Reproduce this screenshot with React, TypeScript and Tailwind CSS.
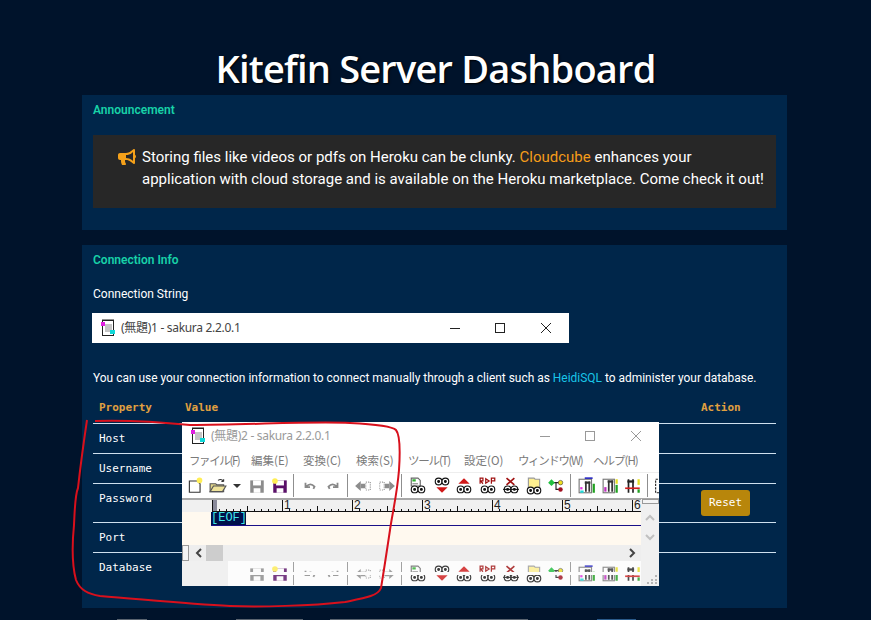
import React from 'react'
import { FaBullhorn } from 'react-icons/fa'

const sans = "font-['Roboto',sans-serif]"

function PageIcon() {
    return (
        <svg width="16" height="18" viewBox="0 0 16 18">
            <rect x="2.5" y="1.5" width="11" height="15" fill="#fff" stroke="#222" />
            <path d="M3 1v-1M5 1v-1M7 1v-1M9 1v-1M11 1v-1M13 1v-1" stroke="#222" />
            <path d="M5 6h7M5 8h7M5 10h7M5 12h5" stroke="#8a8a8a" />
            <rect x="1" y="3" width="4" height="4" fill="#e020e0" />
            <rect x="10" y="11" width="5" height="4" fill="#10d8d8" />
        </svg>
    )
}

function Eyes({ y = 9 }: { y?: number }) {
    return (
        <g fill="#fff" stroke="#111" strokeWidth="1">
            <circle cx="5" cy={y + 3} r="3" />
            <circle cx="11" cy={y + 3} r="3" />
            <circle cx="5" cy={y + 3} r="0.8" fill="#111" />
            <circle cx="11" cy={y + 3} r="0.8" fill="#111" />
        </g>
    )
}

function ToolIcon({ kind }: { kind: string }) {
    return (
        <svg width="18" height="18" viewBox="0 0 16 16" className="shrink-0">
            {kind === 'new' && <>
                <path d="M3 3.5h7l2.5 2.5v7.5h-9.5z" fill="#fff" stroke="#333" />
                <circle cx="12" cy="3" r="2.5" fill="#ffee55" />
            </>}
            {kind === 'open' && <>
                <path d="M1 6h5l1 1h6v6h-12z" fill="#e0d48a" stroke="#555" />
                <path d="M1 13l3-5h11l-3 5z" fill="#efe39a" stroke="#555" />
                <path d="M8 3q3-2 5 1M13 4v-2M13 4h-2" fill="none" stroke="#333" />
            </>}
            {(kind === 'save' || kind === 'saveall') && <>
                <rect x="2" y="3" width="12" height="11" fill={kind === 'save' ? '#8c8c8c' : '#5a1068'} />
                <rect x="4.5" y="3" width="7" height="4.5" fill="#fff" />
                <rect x="5" y="10" width="6" height="4" fill="#fff" />
                {kind === 'saveall' && <circle cx="3.5" cy="3.5" r="2.5" fill="#ffee55" />}
            </>}
            {kind === 'undo' && <path d="M4 5v4h4M4.5 8.5q4-4 7.5 0l-1 2" fill="none" stroke="#888" strokeWidth="1.6" />}
            {kind === 'redo' && <path d="M12 5v4h-4M11.5 8.5q-4-4-7.5 0l1 2" fill="none" stroke="#888" strokeWidth="1.6" />}
            {kind === 'left' && <>
                <path d="M1 8l5-4.5v9z" fill="#8c8c8c" />
                <rect x="6" y="6" width="4" height="4" fill="#8c8c8c" />
                <rect x="10.5" y="4.5" width="4" height="7" fill="none" stroke="#9a9a9a" strokeDasharray="1 1" />
            </>}
            {kind === 'right' && <>
                <path d="M15 8l-5-4.5v9z" fill="#8c8c8c" />
                <rect x="6" y="6" width="4" height="4" fill="#8c8c8c" />
                <rect x="1.5" y="4.5" width="4" height="7" fill="none" stroke="#9a9a9a" strokeDasharray="1 1" />
            </>}
            {kind === 'find' && <>
                <path d="M2 1h6l2 2v5h-8z" fill="#fff" stroke="#666" />
                <rect x="3" y="2" width="3" height="2" fill="#30b030" />
                <path d="M3 6h5" stroke="#888" />
                <Eyes y={8} />
            </>}
            {kind === 'down' && <>
                <Eyes y={1} />
                <path d="M3 9h10l-5 5z" fill="#d01818" />
            </>}
            {kind === 'up' && <>
                <path d="M8 1l5 5h-10z" fill="#d01818" />
                <Eyes y={8} />
            </>}
            {kind === 'rep' && <>
                <path d="M1 6v-5h2.5v2.5h-2.5M3.5 6l-2-2.5M6 1.5l3 2-3 2z M11 6v-5h3v2.5h-3" fill="none" stroke="#a01010" strokeWidth="1.1" />
                <Eyes y={8} />
            </>}
            {kind === 'clear' && <>
                <path d="M4 1l7 6M11 1l-7 6" stroke="#a01010" strokeWidth="1.4" />
                <Eyes y={8} />
                <path d="M1 11h14" stroke="#111" />
            </>}
            {kind === 'grep' && <>
                <path d="M3 1h5l1 1h4v8h-10z" fill="#fff090" stroke="#999" />
                <Eyes y={9} />
            </>}
            {kind === 'tree' && <>
                <path d="M4 5h7M8 5v6h3" stroke="#222" fill="none" />
                <path d="M4 2l3 3-3 3-3-3z" fill="#20c040" />
                <circle cx="12" cy="5" r="2" fill="#f0e020" stroke="#333" strokeWidth="0.5" />
                <circle cx="12" cy="11" r="2" fill="#a01020" />
            </>}
            {kind === 'set1' && <>
                <rect x="1" y="2" width="11" height="12" fill="#fff" stroke="#777" />
                <path d="M6 1h7" stroke="#2020c0" strokeWidth="1.4" />
                <rect x="2" y="9" width="2" height="2" fill="#e030e0" />
                <rect x="2" y="12" width="3" height="2" fill="#20d8d8" />
                <path d="M7 4v9M10 4v9" stroke="#333" strokeWidth="1.5" />
                <path d="M6 5h5" stroke="#333" strokeWidth="2" />
                <rect x="13" y="6" width="2" height="8" fill="#20a020" />
            </>}
            {kind === 'set2' && <>
                <rect x="1" y="2" width="10" height="12" fill="#fff" stroke="#777" />
                <rect x="2" y="9" width="2" height="4" fill="#c030c0" />
                <path d="M6 3v10M9 3v10" stroke="#333" strokeWidth="1.5" />
                <path d="M5 4h5" stroke="#333" strokeWidth="2" />
                <rect x="12" y="2" width="2" height="4" fill="#e8e020" />
                <rect x="12" y="7" width="2" height="7" fill="#20a020" />
            </>}
            {kind === 'set3' && <>
                <path d="M4 2v12M8 2v12" stroke="#222" strokeWidth="1.5" />
                <path d="M3 4h6" stroke="#222" strokeWidth="2" />
                <path d="M1 10h13" stroke="#d02020" strokeWidth="1.5" />
                <rect x="12" y="2" width="2" height="5" fill="#e8e020" />
                <rect x="12" y="11" width="2" height="3" fill="#20a020" />
            </>}
            {kind === 'next' && <rect x="5" y="2" width="6" height="12" fill="#fff" stroke="#222" strokeDasharray="2 1" />}
        </svg>
    )
}

// centres of the toolbar buttons, taken along the page x axis
const tools = [
    { kind: 'new', x: 195 }, { kind: 'open', x: 218 }, { kind: 'arrow', x: 237 },
    { kind: 'save', x: 257 }, { kind: 'saveall', x: 280 }, { kind: 'sep', x: 293 },
    { kind: 'undo', x: 310 }, { kind: 'redo', x: 333 }, { kind: 'sep', x: 347 },
    { kind: 'left', x: 363 }, { kind: 'right', x: 387 }, { kind: 'sep', x: 401 },
    { kind: 'find', x: 418 }, { kind: 'down', x: 442 }, { kind: 'up', x: 464 },
    { kind: 'rep', x: 488 }, { kind: 'clear', x: 511 }, { kind: 'grep', x: 534 },
    { kind: 'tree', x: 556 }, { kind: 'sep', x: 570 }, { kind: 'set1', x: 587 },
    { kind: 'set2', x: 611 }, { kind: 'set3', x: 633 }, { kind: 'sep', x: 647 },
    { kind: 'next', x: 659 },
]

function ToolRow({ ghost }: { ghost?: boolean }) {
    let cursor = 182
    const list = ghost ? tools.filter((t) => !['new', 'open', 'arrow', 'next'].includes(t.kind)) : tools
    return (
        <div className="flex items-center">
            {list.map((t, i) => {
                const w = t.kind === 'sep' ? 1 : t.kind === 'arrow' ? 8 : 18
                const gap = t.x - w / 2 - cursor
                cursor = t.x + w / 2
                return (
                    <span key={i} style={{ marginLeft: gap }} className="flex shrink-0">
                        {t.kind === 'sep' && <span className="h-[23px] w-px bg-[#8f8f8f]" />}
                        {t.kind === 'arrow' && <span className="h-0 w-0 border-x-[4px] border-t-[4px] border-x-transparent border-t-[#333]" />}
                        {t.kind !== 'sep' && t.kind !== 'arrow' && <ToolIcon kind={t.kind} />}
                    </span>
                )
            })}
        </div>
    )
}

function WinButtons({ dim }: { dim?: boolean }) {
    const stroke = dim ? '#999' : '#222'
    return (
        <svg width="108" height="12" viewBox="0 0 108 12">
            <path d="M0 6.5h10" stroke={stroke} />
            <rect x="45.5" y="1.5" width="9" height="9" fill="none" stroke={stroke} />
            <path d="M91 1l10 10M101 1l-10 10" stroke={stroke} />
        </svg>
    )
}

function Ruler() {
    const ticks = Array.from({ length: 61 }, (_, i) => i)
    return (
        <div className="relative h-[14px] bg-[#f0f0f0] border-t-2 border-[#a8a8a8]">
            <svg width="430" height="12" viewBox="0 0 430 12" className="absolute left-[30px] top-0">
                <rect x="0" y="0" width="5" height="12" fill="#8a8a9a" />
                {ticks.map((i) => (
                    <path key={i} d={`M${i * 7 + 0.5} ${i % 10 === 0 ? 0 : i % 5 === 0 ? 6 : 9}V12`} stroke="#111" />
                ))}
                <path d="M0 11.5H430" stroke="#111" />
            </svg>
            {[1, 2, 3, 4, 5, 6].map((n) => (
                <span key={n} style={{ left: 30 + n * 70 + 2 }} className="absolute top-[-2px] text-[12px] leading-[14px] text-[#222] font-['Liberation_Sans',sans-serif]">{n}</span>
            ))}
        </div>
    )
}

function Sakura() {
    return (
        <div className="absolute left-[182px] top-[422px] h-[164px] w-[477px] bg-white flex flex-col overflow-hidden">
            <div className="flex h-[27px] items-center pl-[8px] pr-[11px]">
                <PageIcon />
                <span className="ml-[5px] text-[12px] tracking-[-0.3px] text-[#9a9a9a] font-['Noto_Sans','Noto_Sans_CJK_JP',sans-serif]">(無題)2 - sakura 2.2.0.1</span>
                <span className="ml-auto"><WinButtons dim /></span>
            </div>
            <div className="flex h-[23px] items-center bg-white text-[11.5px] text-[#7a7a7a] font-['Noto_Sans_CJK_JP',sans-serif] relative">
                <span className="absolute left-[7px] tracking-[-1.4px]">ファイル(F)</span>
                <span className="absolute left-[69px]">編集(E)</span>
                <span className="absolute left-[121px]">変換(C)</span>
                <span className="absolute left-[174px]">検索(S)</span>
                <span className="absolute left-[226px] tracking-[-1.2px]">ツール(T)</span>
                <span className="absolute left-[282px]">設定(O)</span>
                <span className="absolute left-[336px] tracking-[-1.4px]">ウィンドウ(W)</span>
                <span className="absolute left-[411px] tracking-[-1px]">ヘルプ(H)</span>
            </div>
            <div className="h-[26px] flex items-center border-t border-[#eeeeee] overflow-hidden">
                <ToolRow />
            </div>
            <Ruler />
            <div className="flex h-[33px] bg-[#fff9ef]">
                <div className="flex-1 pl-[29px]">
                    <div className="border-b border-[#1a1088] h-[14px]">
                        <span className="block h-[13px] w-[35px] bg-[#00104a] text-center text-[12px] leading-[13px] text-[#40e8e8] font-['Liberation_Mono',monospace]">[EOF]</span>
                    </div>
                </div>
            </div>
            <div className="flex h-[16px] items-center bg-[#eeeeee]">
                <span className="h-[16px] w-[7px] border border-[#999] bg-[#f4f4f4]" />
                <span className="ml-[6px] text-[#333]">
                    <svg width="8" height="10" viewBox="0 0 8 10"><path d="M6 1L2 5l4 4" fill="none" stroke="#444" strokeWidth="2" /></svg>
                </span>
                <span className="ml-[3px] h-[16px] w-[17px] bg-[#cdcdcd]" />
                <span className="ml-auto mr-[23px]">
                    <svg width="8" height="10" viewBox="0 0 8 10"><path d="M2 1l4 4-4 4" fill="none" stroke="#444" strokeWidth="2" /></svg>
                </span>
            </div>
            <div className="relative flex-1 bg-[#f0f0f0] overflow-hidden">
                <div className="absolute left-[46px] right-[18px] inset-y-0 bg-white flex items-center overflow-hidden opacity-80">
                    <div className="ml-[-46px]"><ToolRow ghost /></div>
                    <span className="absolute inset-x-0 top-[11px] h-[3px] bg-white" />
                </div>
            </div>
            {/* vertical scroll bar lies over the editor */}
            <div className="absolute right-0 top-[77px] h-[69px] w-[18px] bg-[#f0f0f0] flex flex-col items-center">
                <span className="h-[5px] w-[17px] border border-[#999] bg-[#f4f4f4]" />
                <svg className="mt-[10px]" width="10" height="8" viewBox="0 0 10 8"><path d="M1 6l4-4 4 4" fill="none" stroke="#c0c0c0" strokeWidth="2" /></svg>
                <svg className="mt-[11px]" width="10" height="8" viewBox="0 0 10 8"><path d="M1 2l4 4 4-4" fill="none" stroke="#c0c0c0" strokeWidth="2" /></svg>
            </div>
            <svg className="absolute right-[2px] bottom-[2px]" width="10" height="10" viewBox="0 0 10 10">
                <path d="M8 1h2v2h-2zM4 5h2v2h-2zM8 5h2v2h-2zM0 8h2v2h-2zM4 8h2v2h-2zM8 8h2v2h-2z" fill="#b5b5b5" />
            </svg>
        </div>
    )
}

const rows = [
    { name: 'Host', h: 'h-[30px]' },
    { name: 'Username', h: 'h-[30px]' },
    { name: 'Password', h: 'h-[39px]', reset: true },
    { name: 'Port', h: 'h-[30px]' },
    { name: 'Database', h: 'h-[30px]' },
]

export default function App() {
    return (
        <div className={`relative h-[620px] w-[871px] overflow-hidden bg-[#00132b] ${sans}`}>
            <h1 className="pt-[39px] h-[95px] text-center text-[38px] leading-[58px] tracking-[-0.8px] font-semibold text-white font-['Open_Sans',sans-serif] [text-shadow:1px_1px_2px_#000]">
                Kitefin Server Dashboard
            </h1>

            <section className="ml-[82px] w-[705px] h-[135px] bg-[#00264a] px-[11px] pt-[8px]">
                <h2 className="text-[12px] leading-[15px] font-semibold text-[#18d2a8]">Announcement</h2>
                <div className="mt-[17px] flex h-[73px] bg-[#272727] pl-[25px] pt-[11px]">
                    <FaBullhorn className="mt-[2px] shrink-0 text-[18px] text-[#f5a11a]" />
                    <p className="ml-[6px] text-[15px] leading-[22px] text-white">
                        Storing files like videos or pdfs on Heroku can be clunky. <span className="text-[#f59c1a]">Cloudcube</span> enhances your<br />
                        application with cloud storage and is available on the Heroku marketplace. Come check it out!
                    </p>
                </div>
            </section>

            <section className="ml-[82px] mt-[15px] w-[705px] h-[363px] bg-[#00264a] px-[11px] pt-[8px]">
                <h2 className="text-[12px] leading-[15px] font-semibold text-[#18d2a8]">Connection Info</h2>
                <p className="mt-[18px] text-[12px] leading-[16px] text-white">Connection String</p>
                <p className="mt-[68px] text-[11.95px] leading-[16px] text-white">
                    You can use your connection information to connect manually through a client such as <span className="text-[#19c5e8]">HeidiSQL</span> to administer your database.
                </p>
                <div className="mt-[15px] font-['DejaVu_Sans_Mono',monospace] text-[11px]">
                    <div className="flex h-[22px] items-start px-[6px] font-bold text-[#e0a040]">
                        <span className="w-[86px] leading-[14px]">Property</span>
                        <span className="flex-1 leading-[14px]">Value</span>
                        <span className="w-[69px] leading-[14px]">Action</span>
                    </div>
                    {rows.map((r) => (
                        <div key={r.name} className={`flex border-t border-[#cfe0ee] px-[6px] pt-[8px] text-white ${r.h}`}>
                            <span className="w-[86px] leading-[14px]">{r.name}</span>
                            <span className="flex-1" />
                            <span className="w-[69px]">
                                {r.reset && (
                                    <button className="mt-[-2px] h-[26px] w-[49px] rounded-[3px] bg-[#b8860b] text-[11px] text-white">Reset</button>
                                )}
                            </span>
                        </div>
                    ))}
                </div>
            </section>

            {/* sliver of the next screen at the very bottom */}
            <div className="mt-[11px] flex h-px">
                <span className="ml-[117px] w-[30px] bg-[#5a6470]" />
                <span className="ml-[89px] w-[67px] bg-[#5a6470]" />
                <span className="ml-[27px] w-[198px] bg-[#5a6470]" />
                <span className="ml-[69px] w-[39px] bg-[#2a5a8a]" />
            </div>

            {/* pasted window captures and hand drawn marker on top of the page */}
            <div className="absolute left-[92px] top-[313px] flex h-[30px] w-[477px] items-center bg-white pl-[8px] pr-[11px]">
                <PageIcon />
                <span className="ml-[5px] text-[12px] tracking-[-0.3px] text-[#444] font-['Noto_Sans','Noto_Sans_CJK_JP',sans-serif]">(無題)1 - sakura 2.2.0.1</span>
                <span className="ml-auto"><WinButtons /></span>
            </div>
            <Sakura />
            <svg className="pointer-events-none absolute left-0 top-0" width="871" height="620" viewBox="0 0 871 620">
                <path
                    d="M95 421C130 420 160 422 190 425C250 425 310 421 350 423C370 424 392 426 396 430C401 436 400 455 399 470C397 495 392 515 390 530C387 550 384 570 381 588C378 596 365 598 345 602C310 606 260 607 230 606C190 604 150 600 100 596C88 594 80 590 76 580C72 565 72 545 74 525C75 505 75 495 78 488C80 470 84 440 87 420"
                    fill="none"
                    stroke="#d8101c"
                    strokeWidth="2"
                />
            </svg>
        </div>
    )
}
